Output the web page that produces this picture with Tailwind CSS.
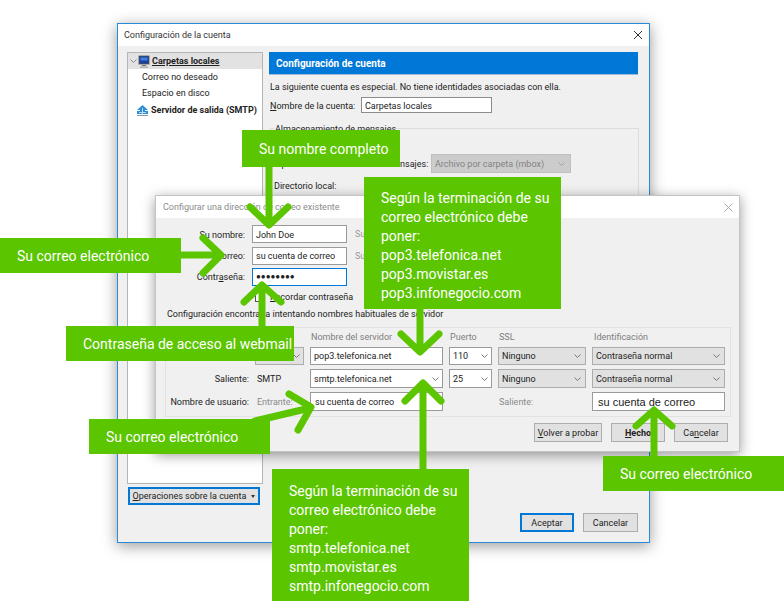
<!DOCTYPE html>
<html lang="es">
  <head>
    <meta charset="UTF-8" />
    <title>Configuración de la cuenta</title>
    <script src="https://cdn.jsdelivr.net/npm/@tailwindcss/browser@4"></script>
  </head>
  <body class="bg-white">
    <div class="relative w-[784px] h-[601px] overflow-hidden whitespace-nowrap bg-white font-['Roboto',sans-serif] text-[9px] leading-[14px] text-[#222]">
      <!-- Back window -->
      <div class="absolute left-[117px] top-[23px] w-[533px] h-[520px] flex flex-col bg-[#f0f0f0] border border-[#2b8ad8] shadow-[0_3px_14px_rgba(0,0,0,0.4)]">
        <div class="h-[22px] bg-white flex items-center justify-between pl-[6px] pr-[6px]">
          <span class="text-[#333]">Configuración de la cuenta</span>
          <svg width="10" height="10" viewBox="0 0 10 10" fill="none" stroke="#333" stroke-width="1"><path d="M1 1l8 8M9 1l-8 8" /></svg>
        </div>
        <div class="flex-1 flex pl-[9px] pr-[11px] pt-[6px] pb-[10px]">
          <!-- Account tree -->
          <div class="w-[136px] shrink-0 flex flex-col">
            <div class="h-[432px] bg-white border border-[#b5b5b5]">
              <div class="h-[16px] bg-[#e2e2e2] flex items-center pl-[2px]">
                <svg width="7" height="5" viewBox="0 0 7 5" fill="none" stroke="#888"><path d="M0.5 0.5l3 3 3-3" /></svg>
                <svg class="ml-[1px]" width="12" height="13" viewBox="0 0 12 13"><rect x="1" y="1" width="10" height="8" fill="#1b3f9c" stroke="#555" stroke-width="0.8" /><rect x="2.5" y="2.5" width="7" height="3" fill="#3f7fe0" /><path d="M4 10h4v1H4z" fill="#777" /><path d="M2 11.5h8v1H2z" fill="#999" /></svg>
                <span class="ml-[2px] font-bold underline">Carpetas locales</span>
              </div>
              <div class="h-[16px] flex items-center pl-[14px]">Correo no deseado</div>
              <div class="h-[16px] flex items-center pl-[14px]">Espacio en disco</div>
              <div class="mt-px h-[16px] flex items-center pl-[8px]">
                <svg width="13" height="11" viewBox="0 0 13 11"><path d="M6.5 0L12 5H9v1h3v3H1V6h3V5H1z" fill="#2f8fd6" /><path d="M1 10.5h11" stroke="#8a9aa6" stroke-width="1" /><path d="M6.5 3v7M3 7.5h7" stroke="#d5ecfa" stroke-width="0.8" /></svg>
                <span class="ml-[2px] font-bold">Servidor de salida (SMTP)</span>
              </div>
            </div>
            <button class="mt-[3px] w-[132px] h-[18px] ml-px flex items-center justify-center gap-[5px] bg-[#e1e1e1] border-2 border-[#0078d7]">
              <span><span class="underline">O</span>peraciones sobre la cuenta</span>
              <span class="w-0 h-0 border-x-[2px] border-x-transparent border-t-[3px] border-t-[#333]"></span>
            </button>
          </div>
          <!-- Account settings -->
          <div class="flex-1 min-w-0 ml-[6px] flex flex-col">
            <div class="h-[23px] bg-[#0078d7] border-b border-[#9dbcd8] flex items-center pl-[7px] pt-[2px] text-[10px] font-bold text-white">Configuración de cuenta</div>
            <p class="mt-[5px] pl-px">La siguiente cuenta es especial. No tiene identidades asociadas con ella.</p>
            <div class="mt-[3px] flex items-center pl-px">
              <span class="w-[91px] pt-px"><span class="underline">N</span>ombre de la cuenta:</span>
              <div class="w-[131px] h-[16px] bg-white border border-[#8c8c8c] flex items-center pl-[3px] pt-px">Carpetas locales</div>
            </div>
            <div class="mt-[15px] h-[250px] w-[369px] ml-px border border-[#dcdcdc] pl-[3px]">
              <span class="block w-fit -mt-[7px] px-px bg-[#f0f0f0]">Almacenamiento de mensajes</span>
              <div class="mt-[18px] flex items-center">
                <span class="w-[154px] text-right">Tipo de almacenamiento de mensajes:</span>
                <div class="ml-[3px] w-[140px] h-[19px] bg-[#cccccc] border border-[#bfbfbf] text-[#838383] flex items-center justify-between pl-[3px] pr-[5px]">
                  <span>Archivo por carpeta (mbox)</span>
                  <svg width="7" height="4" viewBox="0 0 7 4" fill="none" stroke="#a5a5a5"><path d="M0.5 0.5l3 3 3-3" /></svg>
                </div>
              </div>
              <p class="mt-[6px]">Directorio local:</p>
            </div>
            <div class="mt-auto flex justify-end gap-[9px]">
              <button class="w-[54px] h-[19px] bg-[#e1e1e1] border-2 border-[#0078d7]">Aceptar</button>
              <button class="w-[55px] h-[19px] bg-[#e1e1e1] border border-[#adadad]">Cancelar</button>
            </div>
          </div>
        </div>
      </div>

      <!-- Front window -->
      <div class="absolute left-[155px] top-[195px] w-[585px] h-[257px] flex flex-col bg-[#f0f0f0] border border-[#c4c4c4] shadow-[0_3px_12px_rgba(0,0,0,0.4)]">
        <div class="h-[22px] bg-white flex items-center justify-between pl-[7px] pr-[6px]">
          <span class="text-[#8a8a8a]">Configurar una dirección de correo existente</span>
          <svg width="9" height="9" viewBox="0 0 9 9" fill="none" stroke="#aaa" stroke-width="1"><path d="M0.5 0.5l8 8M8.5 0.5l-8 8" /></svg>
        </div>
        <div class="flex-1 flex flex-col pt-[7px]">
          <div class="flex items-center">
            <span class="w-[89px] text-right pt-px">Su nombre:</span>
            <div class="ml-[7px] w-[95px] h-[18px] bg-white border border-[#9a9a9a] flex items-center pl-[3px] pt-px">John Doe</div>
            <span class="ml-[8px] text-[#9a9a9a]">Su</span>
          </div>
          <div class="mt-[4px] flex items-center">
            <span class="w-[89px] text-right">Correo:</span>
            <div class="ml-[7px] w-[95px] h-[18px] bg-white border border-[#9a9a9a] flex items-center pl-[3px]">su cuenta de correo</div>
            <span class="ml-[8px] text-[#9a9a9a]">Su</span>
          </div>
          <div class="mt-[3px] flex items-center">
            <span class="w-[89px] text-right">Contr<span class="underline">a</span>seña:</span>
            <div class="ml-[7px] w-[95px] h-[18px] bg-white border border-[#0078d7] flex items-center pl-[3px] text-[8px] font-bold">●●●●●●●●</div>
          </div>
          <div class="mt-[4px] flex items-center h-[14px]">
            <span class="ml-[99px] w-[10px] h-[10px] bg-white border border-[#555]"></span>
            <span class="ml-[5px]"><span class="underline">R</span>ecordar contraseña</span>
          </div>
          <p class="mt-[3px] ml-[11px]">Configuración encontrada intentando nombres habituales de servidor</p>
          <!-- Server settings -->
          <div class="mt-[6px] mx-[9px] w-[566px] border border-[#e2e2e2] pt-[2px] pb-[5px] grid grid-cols-[83px_49px_133px_43px_88px_133px] grid-rows-[13px_18px_19px_19px] gap-x-[6px] gap-y-[4px] items-center">
            <span></span>
            <span></span>
            <span class="pl-px text-[#7d7d7d]">Nombre del servidor</span>
            <span class="pl-px text-[#7d7d7d]">Puerto</span>
            <span class="pl-px text-[#7d7d7d]">SSL</span>
            <span class="pl-[2px] text-[#7d7d7d]">Identificación</span>

            <span class="text-right">Entrante:</span>
            <div class="h-[18px] bg-[#e1e1e1] border border-[#adadad] flex items-center justify-between pl-[2px] pr-[3px]">
              <span>POP3</span>
              <svg width="7" height="4" viewBox="0 0 7 4" fill="none" stroke="#777"><path d="M0.5 0.5l3 3 3-3" /></svg>
            </div>
            <div class="h-[18px] bg-white border border-[#9a9a9a] flex items-center pl-[3px]">pop3.telefonica.net</div>
            <div class="h-[18px] bg-white border border-[#9a9a9a] flex items-center justify-between pl-[3px] pr-[3px]">
              <span>110</span>
              <svg width="7" height="4" viewBox="0 0 7 4" fill="none" stroke="#777"><path d="M0.5 0.5l3 3 3-3" /></svg>
            </div>
            <div class="h-[18px] bg-[#e1e1e1] border border-[#adadad] flex items-center justify-between pl-[3px] pr-[4px]">
              <span>Ninguno</span>
              <svg width="7" height="4" viewBox="0 0 7 4" fill="none" stroke="#777"><path d="M0.5 0.5l3 3 3-3" /></svg>
            </div>
            <div class="h-[18px] bg-[#e1e1e1] border border-[#adadad] flex items-center justify-between pl-[3px] pr-[4px]">
              <span>Contraseña normal</span>
              <svg width="7" height="4" viewBox="0 0 7 4" fill="none" stroke="#777"><path d="M0.5 0.5l3 3 3-3" /></svg>
            </div>

            <span class="text-right">Saliente:</span>
            <span class="pl-[2px]">SMTP</span>
            <div class="h-[19px] bg-white border border-[#9a9a9a] flex items-center justify-between pl-[3px] pr-[3px]">
              <span>smtp.telefonica.net</span>
              <svg width="7" height="4" viewBox="0 0 7 4" fill="none" stroke="#777"><path d="M0.5 0.5l3 3 3-3" /></svg>
            </div>
            <div class="h-[19px] bg-white border border-[#9a9a9a] flex items-center justify-between pl-[3px] pr-[3px]">
              <span>25</span>
              <svg width="7" height="4" viewBox="0 0 7 4" fill="none" stroke="#777"><path d="M0.5 0.5l3 3 3-3" /></svg>
            </div>
            <div class="h-[19px] bg-[#e1e1e1] border border-[#adadad] flex items-center justify-between pl-[3px] pr-[4px]">
              <span>Ninguno</span>
              <svg width="7" height="4" viewBox="0 0 7 4" fill="none" stroke="#777"><path d="M0.5 0.5l3 3 3-3" /></svg>
            </div>
            <div class="h-[19px] bg-[#e1e1e1] border border-[#adadad] flex items-center justify-between pl-[3px] pr-[4px]">
              <span>Contraseña normal</span>
              <svg width="7" height="4" viewBox="0 0 7 4" fill="none" stroke="#777"><path d="M0.5 0.5l3 3 3-3" /></svg>
            </div>

            <span class="text-right">Nombre de usuario:</span>
            <span class="pl-[2px] text-[#8a8a8a]">Entrante:</span>
            <div class="h-[19px] bg-white border border-[#9a9a9a] flex items-center pl-[4px]">su cuenta de correo</div>
            <span></span>
            <span class="pl-px text-[#8a8a8a]">Saliente:</span>
            <div class="h-[19px] bg-white border border-[#9a9a9a] flex items-center pl-[5px] font-['Liberation_Sans',sans-serif] text-[11px]">su cuenta de correo</div>
          </div>
          <div class="mt-[6px] pr-[11px] flex justify-end gap-[9px]">
            <button class="w-[68px] h-[19px] bg-[#e1e1e1] border border-[#adadad]"><span class="underline">V</span>olver a probar</button>
            <button class="w-[54px] h-[19px] bg-[#e1e1e1] border border-[#adadad] font-bold"><span class="underline">H</span>echo</button>
            <button class="w-[54px] h-[19px] bg-[#e1e1e1] border border-[#adadad]">Ca<span class="underline">n</span>celar</button>
          </div>
        </div>
      </div>

      <!-- Arrows -->
      <svg class="absolute inset-0" width="784" height="601" viewBox="0 0 784 601" fill="none" stroke="#5bc500" stroke-width="7" stroke-linecap="round" stroke-linejoin="round">
        <path d="M269 165V224M250 207l19 18 19-18" />
        <path d="M180 255H220M203 238l18 17-18 18" />
        <path d="M262 328V287M244 302l18-17 19 17" />
        <path d="M420 307V350M401 334l19 18 19-18" />
        <path d="M255 421L310 408M289 394l22 13-13 23" />
        <path d="M423 471V384M405 401l18-18 18 18" />
        <path d="M654 458V412M636 426l18-16 18 16" />
      </svg>

      <!-- Callouts -->
      <div class="absolute left-[242px] top-[130px] w-[158px] h-[37px] bg-[#5bc500] text-white text-[14px] flex items-center pl-[17px]">Su nombre completo</div>
      <div class="absolute left-[364px] top-[177px] w-[197px] h-[132px] bg-[#5bc500] text-white text-[14px] leading-[19px] pl-[17px] pt-[12px]">
        Según la terminación de su<br />correo electrónico debe<br />poner:<br />pop3.telefonica.net<br />pop3.movistar.es<br />pop3.infonegocio.com
      </div>
      <div class="absolute left-0 top-[238px] w-[181px] h-[35px] bg-[#5bc500] text-white text-[14px] flex items-center pl-[17px]">Su correo electrónico</div>
      <div class="absolute left-[66px] top-[326px] w-[228px] h-[35px] bg-[#5bc500] text-white text-[14px] flex items-center pl-[17px]">Contraseña de acceso al webmail</div>
      <div class="absolute left-[89px] top-[419px] w-[181px] h-[35px] bg-[#5bc500] text-white text-[14px] flex items-center pl-[17px]">Su correo electrónico</div>
      <div class="absolute left-[272px] top-[469px] w-[197px] h-[132px] bg-[#5bc500] text-white text-[14px] leading-[19px] pl-[17px] pt-[13px]">
        Según la terminación de su<br />correo electrónico debe<br />poner:<br />smtp.telefonica.net<br />smtp.movistar.es<br />smtp.infonegocio.com
      </div>
      <div class="absolute left-[603px] top-[456px] w-[181px] h-[35px] bg-[#5bc500] text-white text-[14px] flex items-center pl-[17px]">Su correo electrónico</div>
    </div>
  </body>
</html>
